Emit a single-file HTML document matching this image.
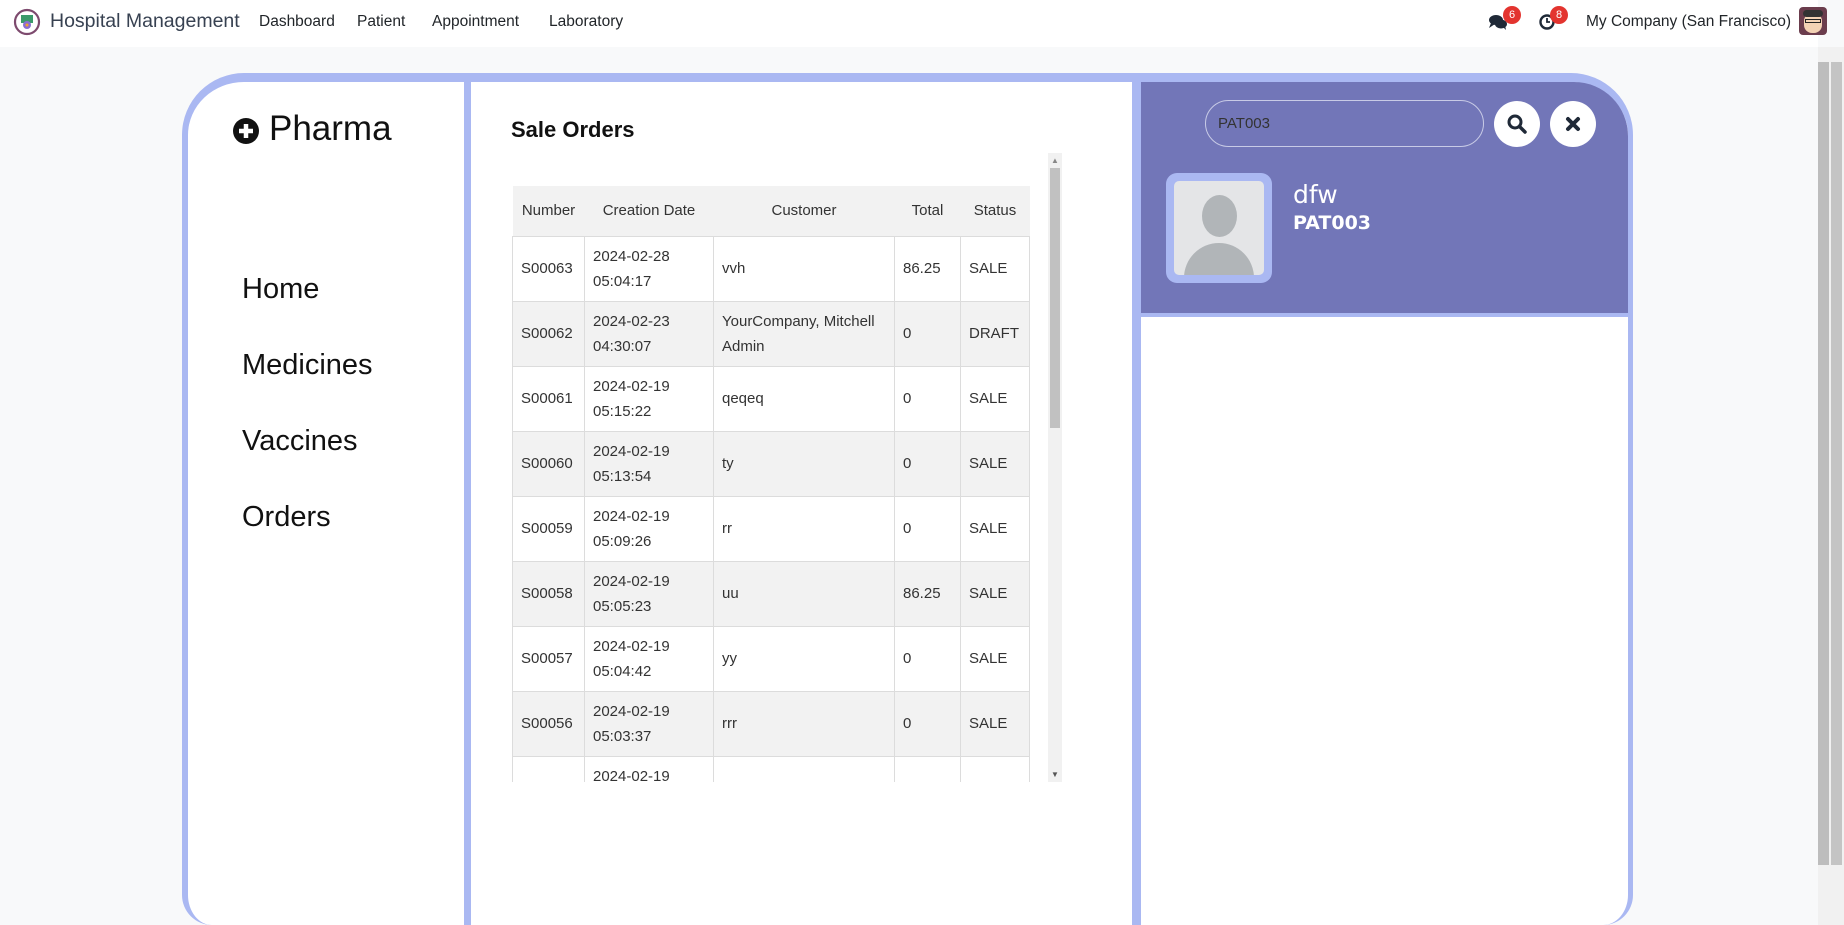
<!DOCTYPE html>
<html><head><meta charset="utf-8"><style>
*{box-sizing:border-box;margin:0;padding:0}
html,body{width:1844px;height:925px;overflow:hidden}
body{background:#f8f9fa;font-family:"Liberation Sans",sans-serif;position:relative;color:#212529}
#wrap{position:absolute;left:0;top:0;width:1844px;height:925px;overflow:hidden}
.nav{position:absolute;left:0;top:0;width:1818px;height:47px;background:#fff;font-family:"Liberation Sans",sans-serif}
.nav span{position:absolute;top:13px;font-size:15.5px;color:#212529}
.a{position:absolute}
.frame{position:absolute;left:182px;top:73px;width:1451px;height:852px;border:solid #aab8f2;border-width:9px 5px 0 6px;border-radius:62px 62px 30px 30px;background:#fff;overflow:hidden}
.side a{position:absolute;left:242px;font-size:29px;color:#111;font-family:"Liberation Sans",sans-serif;text-decoration:none}
table{border-collapse:collapse;font-size:15px;color:#333;width:517px;table-layout:fixed}
td,th{border:1px solid #dcdcdc;padding:0 8px;font-weight:normal;line-height:25px;text-align:left;vertical-align:middle}
th{height:50px;border:none;text-align:center}
td{height:65px}
tr.g td{background:#f2f2f2}
thead tr{background:#f2f2f2}
</style></head><body><div id="wrap">
<div class="nav">
<svg class="a" style="left:13px;top:8px" width="28" height="28" viewBox="0 0 28 28"><circle cx="14" cy="14" r="12" fill="#fff" stroke="#7d4a6e" stroke-width="2.2"/><rect x="8" y="7" width="12" height="8" fill="#3a9a6a"/><circle cx="14" cy="17" r="4" fill="#8a6ed0"/><circle cx="14" cy="17" r="1.5" fill="#f0a030"/></svg>
<span style="left:50px;top:10px;font-size:19.5px;color:#374151">Hospital Management</span>
<span style="left:259px">Dashboard</span>
<span style="left:357px">Patient</span>
<span style="left:432px">Appointment</span>
<span style="left:549px">Laboratory</span>
<svg class="a" style="left:1488px;top:13px" width="20" height="18" viewBox="0 0 20 18"><ellipse cx="8" cy="7" rx="7" ry="5" fill="#1f2937"/><ellipse cx="13" cy="11" rx="6" ry="4.5" fill="#1f2937"/><path d="M3 10 L1 15 L7 11Z M15 14 L18 17 L17 12Z" fill="#1f2937"/></svg>
<div class="a" style="left:1503px;top:6px;width:18px;height:18px;border-radius:9px;background:#e3342f;color:#fff;font-size:11px;text-align:center;line-height:18px">6</div>
<svg class="a" style="left:1538px;top:12px" width="18" height="18" viewBox="0 0 18 18"><circle cx="9" cy="10" r="6.5" fill="none" stroke="#1f2937" stroke-width="2.4"/><path d="M9 6v4h3" stroke="#1f2937" stroke-width="1.8" fill="none"/></svg>
<div class="a" style="left:1550px;top:6px;width:18px;height:18px;border-radius:9px;background:#e3342f;color:#fff;font-size:11px;text-align:center;line-height:18px">8</div>
<span style="left:1586px">My Company (San Francisco)</span>
<div class="a" style="left:1799px;top:7px;width:28px;height:28px;border-radius:4px;background:#6b3d4d;overflow:hidden"><div class="a" style="left:5px;top:6px;width:18px;height:20px;border-radius:8px;background:#f3d2b4"></div><div class="a" style="left:4px;top:3px;width:20px;height:7px;border-radius:4px;background:#333"></div><div class="a" style="left:6px;top:12px;width:16px;height:4px;border:1.5px solid #222"></div></div>
</div>
<div class="a" style="left:1818px;top:47px;width:26px;height:878px;background:#f1f1f1"></div>
<div class="a" style="left:1818px;top:62px;width:11px;height:803px;background:#bdbdbd"></div>
<div class="a" style="left:1831px;top:62px;width:11px;height:803px;background:#c4c4c4"></div>

<div class="frame"></div>
<div class="a" style="left:464px;top:82px;width:7px;height:843px;background:#aab8f2"></div>
<div class="a" style="left:1132px;top:82px;width:9px;height:843px;background:#aab8f2"></div>
<div class="a" style="left:1141px;top:82px;width:487px;height:231px;background:#7276b8;border-top-right-radius:54px"></div>
<div class="a" style="left:1141px;top:313px;width:487px;height:4px;background:#aab8f2"></div>

<svg class="a" style="left:232px;top:117px" width="28" height="28" viewBox="0 0 28 28"><circle cx="14" cy="14" r="13" fill="#111"/><path d="M14 7v14M7 14h14" stroke="#fff" stroke-width="4.5"/></svg>
<div class="a" style="left:269px;top:109px;font-size:35px;color:#111">Pharma</div>
<div class="side">
<a style="top:273px">Home</a>
<a style="top:349px">Medicines</a>
<a style="top:425px">Vaccines</a>
<a style="top:501px">Orders</a>
</div>

<div class="a" style="left:511px;top:117px;font-size:22px;font-weight:bold;color:#111">Sale Orders</div>
<div class="a" style="left:512px;top:153px;width:550px;height:629px;overflow:hidden">
<div style="position:absolute;left:0;top:33px">
<table>
<colgroup><col style="width:72px"><col style="width:129px"><col style="width:181px"><col style="width:66px"><col style="width:69px"></colgroup>
<thead><tr><th>Number</th><th>Creation Date</th><th>Customer</th><th>Total</th><th>Status</th></tr></thead>
<tbody>
<tr><td>S00063</td><td>2024-02-28<br>05:04:17</td><td>vvh</td><td>86.25</td><td>SALE</td></tr>
<tr class="g"><td>S00062</td><td>2024-02-23<br>04:30:07</td><td>YourCompany, Mitchell Admin</td><td>0</td><td>DRAFT</td></tr>
<tr><td>S00061</td><td>2024-02-19<br>05:15:22</td><td>qeqeq</td><td>0</td><td>SALE</td></tr>
<tr class="g"><td>S00060</td><td>2024-02-19<br>05:13:54</td><td>ty</td><td>0</td><td>SALE</td></tr>
<tr><td>S00059</td><td>2024-02-19<br>05:09:26</td><td>rr</td><td>0</td><td>SALE</td></tr>
<tr class="g"><td>S00058</td><td>2024-02-19<br>05:05:23</td><td>uu</td><td>86.25</td><td>SALE</td></tr>
<tr><td>S00057</td><td>2024-02-19<br>05:04:42</td><td>yy</td><td>0</td><td>SALE</td></tr>
<tr class="g"><td>S00056</td><td>2024-02-19<br>05:03:37</td><td>rrr</td><td>0</td><td>SALE</td></tr>
<tr><td></td><td>2024-02-19<br>05:02:11</td><td></td><td></td><td></td></tr>
</tbody></table></div>
<div class="a" style="left:536px;top:0;width:14px;height:629px;background:#f1f1f1"></div>
<div class="a" style="left:538px;top:15px;width:10px;height:260px;background:#c1c1c1"></div>
<div class="a" style="left:539px;top:3px;font-size:8px;color:#888">▲</div>
<div class="a" style="left:539px;top:617px;font-size:8px;color:#555">▼</div>
</div>

<div class="a" style="left:1205px;top:100px;width:279px;height:47px;border:1px solid #c8cbe6;border-radius:24px;font-size:15px;color:#333;padding:14px 0 0 12px">PAT003</div>
<div class="a" style="left:1494px;top:101px;width:46px;height:46px;border-radius:23px;background:#fff"></div>
<svg class="a" style="left:1506px;top:113px" width="22" height="22" viewBox="0 0 22 22"><circle cx="9" cy="9" r="6" fill="none" stroke="#1f2937" stroke-width="3"/><path d="M13.5 13.5L19 19" stroke="#1f2937" stroke-width="3.5" stroke-linecap="round"/></svg>
<div class="a" style="left:1550px;top:101px;width:46px;height:46px;border-radius:23px;background:#fff"></div>
<svg class="a" style="left:1564px;top:115px" width="18" height="18" viewBox="0 0 18 18"><path d="M4 4L14 14M14 4L4 14" stroke="#1f2937" stroke-width="4" stroke-linecap="round"/></svg>
<div class="a" style="left:1166px;top:173px;width:106px;height:110px;border-radius:11px;background:#aab8f2"></div>
<div class="a" style="left:1174px;top:181px;width:90px;height:94px;border-radius:5px;background:#e4e5e7;overflow:hidden">
<div class="a" style="left:28px;top:14px;width:35px;height:42px;border-radius:50%;background:#b1b5b8"></div>
<div class="a" style="left:10px;top:62px;width:70px;height:52px;border-radius:35px 35px 0 0;background:#b1b5b8"></div>
</div>
<div class="a" style="left:1293px;top:180px;font-size:25px;color:#fff;font-family:'DejaVu Sans',sans-serif">dfw</div>
<div class="a" style="left:1293px;top:212px;font-size:19px;font-weight:bold;color:#fff;font-family:'DejaVu Sans',sans-serif">PAT003</div>
</div></body></html>
